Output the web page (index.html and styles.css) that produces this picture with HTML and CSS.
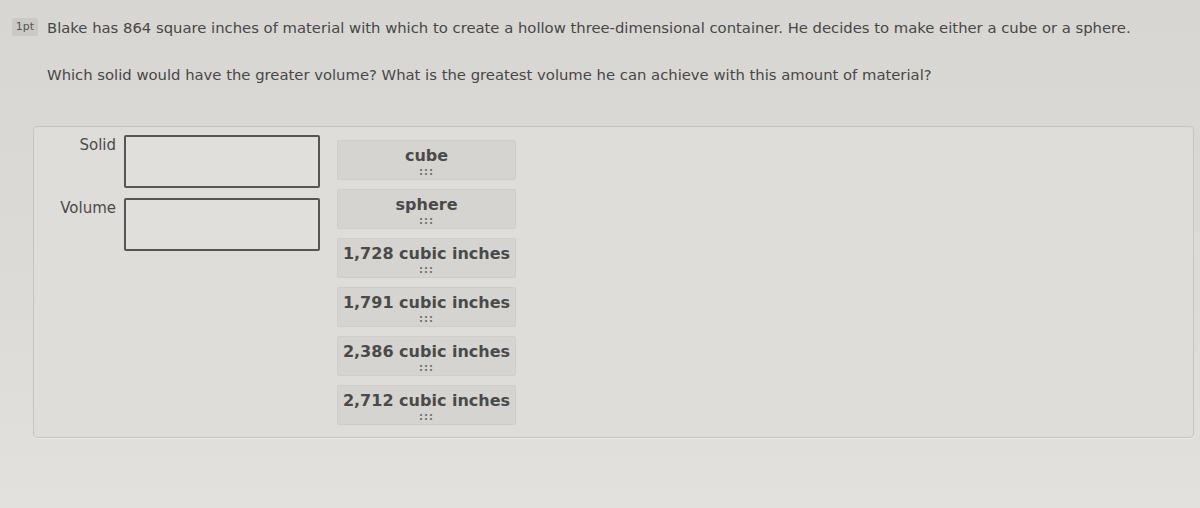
FILE: index.html
```html
<!DOCTYPE html>
<html>
<head>
<meta charset="utf-8">
<link rel="stylesheet" href="styles.css">
</head>
<body>
<div class="page">
  <div class="qline">
    <span class="badge">1pt</span>
    <p class="qtext">Blake has 864 square inches of material with which to create a hollow three-dimensional container. He decides to make either a cube or a sphere.</p>
  </div>
  <p class="qtext second">Which solid would have the greater volume? What is the greatest volume he can achieve with this amount of material?</p>
  <div class="panel">
    <div class="targets">
      <div class="row"><span class="label">Solid</span><div class="drop"></div></div>
      <div class="row"><span class="label">Volume</span><div class="drop"></div></div>
    </div>
    <div class="tiles">
      <div class="tile"><span class="t">cube</span><span class="grip">:::</span></div>
      <div class="tile"><span class="t">sphere</span><span class="grip">:::</span></div>
      <div class="tile"><span class="t">1,728 cubic inches</span><span class="grip">:::</span></div>
      <div class="tile"><span class="t">1,791 cubic inches</span><span class="grip">:::</span></div>
      <div class="tile"><span class="t">2,386 cubic inches</span><span class="grip">:::</span></div>
      <div class="tile"><span class="t">2,712 cubic inches</span><span class="grip">:::</span></div>
    </div>
  </div>
</div>
</body>
</html>
```
FILE: styles.css
```css
html, body {
  margin: 0;
  padding: 0;
}
body {
  width: 1200px;
  height: 508px;
  overflow: hidden;
  background: linear-gradient(180deg, #d8d6d2 0%, #dddbd7 60%, #e3e1dd 100%);
  font-family: "DejaVu Sans", Verdana, sans-serif;
  color: #4b4b4b;
}
.page {
  padding-top: 17px;
}
.qline {
  display: flex;
  align-items: center;
  padding-left: 12px;
  height: 20px;
}
.badge {
  display: inline-block;
  width: 26px;
  height: 18px;
  line-height: 18px;
  text-align: center;
  font-size: 11px;
  background: #cbc9c5;
  border-radius: 2px;
  color: #555;
  margin-right: 9px;
}
.qtext {
  margin: 0;
  font-size: 14.8px;
  color: #474747;
  white-space: nowrap;
}
.second {
  padding-left: 47px;
  margin-top: 29px;
}
.panel {
  margin: 43px 0 0 33px;
  width: 1161px;
  height: 312px;
  box-sizing: border-box;
  border: 1px solid #c6c4c0;
  border-radius: 4px;
  background: #dfddd9;
  box-shadow: 0 1px 0 #ecebe8;
  display: flex;
  align-items: flex-start;
}
.targets {
  padding-top: 8px;
  display: flex;
  flex-direction: column;
  gap: 10px;
}
.row {
  display: flex;
  align-items: flex-start;
}
.label {
  width: 82px;
  text-align: right;
  font-size: 15px;
  padding-right: 8px;
  padding-top: 1px;
  color: #4a4a4a;
}
.drop {
  width: 196px;
  height: 53px;
  box-sizing: border-box;
  border: 2px solid #555;
  border-radius: 2px;
  background: #e1dfdb;
}
.tiles {
  margin-left: 17px;
  padding-top: 13px;
  display: flex;
  flex-direction: column;
  gap: 9px;
}
.tile {
  width: 179px;
  height: 40px;
  box-sizing: border-box;
  background: #d6d4d0;
  border: 1px solid #cfcdc9;
  border-radius: 2px;
  display: flex;
  flex-direction: column;
  align-items: center;
  padding-top: 5px;
}
.t {
  font-weight: bold;
  font-size: 16px;
  line-height: 19px;
  color: #4a4a4a;
  white-space: nowrap;
}
.grip {
  font-size: 10px;
  line-height: 11px;
  letter-spacing: 1px;
  color: #707070;
  font-weight: bold;
  margin-top: 1px;
}
```
